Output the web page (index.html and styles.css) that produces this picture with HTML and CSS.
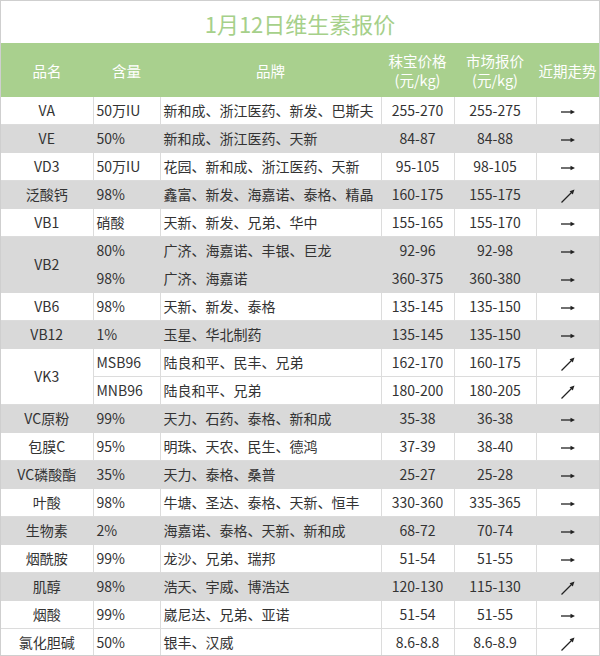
FILE: index.html
```html
<!DOCTYPE html>
<html lang="zh-CN">
<head>
<meta charset="utf-8">
<link rel="stylesheet" href="styles.css">
</head>
<body>
<div class="sheet">
  <div class="title">1月12日维生素报价</div>
  <table class="grid">
    <colgroup>
      <col class="c1"><col class="c2"><col class="c3"><col class="c4"><col class="c5"><col class="c6">
    </colgroup>
    <thead>
      <tr>
        <th>品名</th><th>含量</th><th>品牌</th>
        <th>秣宝价格<br>(元/kg)</th><th>市场报价<br>(元/kg)</th><th>近期走势</th>
      </tr>
    </thead>
    <tbody>
      <tr><td class="name">VA</td><td class="lt">50万IU</td><td class="lt">新和成、浙江医药、新发、巴斯夫</td><td>255-270</td><td>255-275</td><td><svg class="ar" viewBox="0 0 16 16"><use href="#flat"/></svg></td></tr>
      <tr class="g"><td class="name">VE</td><td class="lt">50%</td><td class="lt">新和成、浙江医药、天新</td><td>84-87</td><td>84-88</td><td><svg class="ar" viewBox="0 0 16 16"><use href="#flat"/></svg></td></tr>
      <tr><td class="name">VD3</td><td class="lt">50万IU</td><td class="lt">花园、新和成、浙江医药、天新</td><td>95-105</td><td>98-105</td><td><svg class="ar" viewBox="0 0 16 16"><use href="#flat"/></svg></td></tr>
      <tr class="g"><td class="name">泛酸钙</td><td class="lt">98%</td><td class="lt">鑫富、新发、海嘉诺、泰格、精晶</td><td>160-175</td><td>155-175</td><td><svg class="ar" viewBox="0 0 16 16"><use href="#up"/></svg></td></tr>
      <tr><td class="name">VB1</td><td class="lt">硝酸</td><td class="lt">天新、新发、兄弟、华中</td><td>155-165</td><td>155-170</td><td><svg class="ar" viewBox="0 0 16 16"><use href="#flat"/></svg></td></tr>
      <tr class="g"><td class="name" rowspan="2">VB2</td><td class="lt">80%</td><td class="lt">广济、海嘉诺、丰银、巨龙</td><td>92-96</td><td>92-98</td><td><svg class="ar" viewBox="0 0 16 16"><use href="#flat"/></svg></td></tr>
      <tr class="g"><td class="lt">98%</td><td class="lt">广济、海嘉诺</td><td>360-375</td><td>360-380</td><td><svg class="ar" viewBox="0 0 16 16"><use href="#flat"/></svg></td></tr>
      <tr><td class="name">VB6</td><td class="lt">98%</td><td class="lt">天新、新发、泰格</td><td>135-145</td><td>135-150</td><td><svg class="ar" viewBox="0 0 16 16"><use href="#flat"/></svg></td></tr>
      <tr class="g"><td class="name">VB12</td><td class="lt">1%</td><td class="lt">玉星、华北制药</td><td>135-145</td><td>135-150</td><td><svg class="ar" viewBox="0 0 16 16"><use href="#flat"/></svg></td></tr>
      <tr><td class="name" rowspan="2">VK3</td><td class="lt">MSB96</td><td class="lt">陆良和平、民丰、兄弟</td><td>162-170</td><td>160-175</td><td><svg class="ar" viewBox="0 0 16 16"><use href="#up"/></svg></td></tr>
      <tr><td class="lt">MNB96</td><td class="lt">陆良和平、兄弟</td><td>180-200</td><td>180-205</td><td><svg class="ar" viewBox="0 0 16 16"><use href="#up"/></svg></td></tr>
      <tr class="g"><td class="name">VC原粉</td><td class="lt">99%</td><td class="lt">天力、石药、泰格、新和成</td><td>35-38</td><td>36-38</td><td><svg class="ar" viewBox="0 0 16 16"><use href="#flat"/></svg></td></tr>
      <tr><td class="name">包膜C</td><td class="lt">95%</td><td class="lt">明珠、天农、民生、德鸿</td><td>37-39</td><td>38-40</td><td><svg class="ar" viewBox="0 0 16 16"><use href="#flat"/></svg></td></tr>
      <tr class="g"><td class="name">VC磷酸酯</td><td class="lt">35%</td><td class="lt">天力、泰格、桑普</td><td>25-27</td><td>25-28</td><td><svg class="ar" viewBox="0 0 16 16"><use href="#flat"/></svg></td></tr>
      <tr><td class="name">叶酸</td><td class="lt">98%</td><td class="lt">牛塘、圣达、泰格、天新、恒丰</td><td>330-360</td><td>335-365</td><td><svg class="ar" viewBox="0 0 16 16"><use href="#flat"/></svg></td></tr>
      <tr class="g"><td class="name">生物素</td><td class="lt">2%</td><td class="lt">海嘉诺、泰格、天新、新和成</td><td>68-72</td><td>70-74</td><td><svg class="ar" viewBox="0 0 16 16"><use href="#flat"/></svg></td></tr>
      <tr><td class="name">烟酰胺</td><td class="lt">99%</td><td class="lt">龙沙、兄弟、瑞邦</td><td>51-54</td><td>51-55</td><td><svg class="ar" viewBox="0 0 16 16"><use href="#flat"/></svg></td></tr>
      <tr class="g"><td class="name">肌醇</td><td class="lt">98%</td><td class="lt">浩天、宇威、博浩达</td><td>120-130</td><td>115-130</td><td><svg class="ar" viewBox="0 0 16 16"><use href="#up"/></svg></td></tr>
      <tr><td class="name">烟酸</td><td class="lt">99%</td><td class="lt">崴尼达、兄弟、亚诺</td><td>51-54</td><td>51-55</td><td><svg class="ar" viewBox="0 0 16 16"><use href="#flat"/></svg></td></tr>
      <tr><td class="name">氯化胆碱</td><td class="lt">50%</td><td class="lt">银丰、汉威</td><td>8.6-8.8</td><td>8.6-8.9</td><td><svg class="ar" viewBox="0 0 16 16"><use href="#up"/></svg></td></tr>
    </tbody>
  </table>
</div>
<svg class="defs" width="0" height="0">
  <defs>
    <g id="flat"><line x1="1" y1="8" x2="12" y2="8" stroke="#222" stroke-width="1.3"/><polygon points="15,8 10.5,5.7 10.5,10.3" fill="#222"/></g>
    <g id="up"><line x1="1.5" y1="14.5" x2="12" y2="4" stroke="#222" stroke-width="1.3"/><polygon points="14.5,1.5 9.6,3.2 12.8,6.4" fill="#222"/></g>
  </defs>
</svg>
</body>
</html>
```
FILE: styles.css
```css
html, body {
  margin: 0;
  padding: 0;
  background: #ffffff;
}
.sheet {
  width: 600px;
  height: 656px;
  box-sizing: border-box;
  border: 1px solid #cfcfcf;
  overflow: hidden;
  font-family: "Noto Sans CJK SC", "Noto Sans", sans-serif;
  color: #333333;
}
.title {
  height: 42px;
  line-height: 44px;
  text-align: center;
  font-size: 22px;
  color: #a6d08a;
}
.grid {
  width: 598px;
  border-collapse: collapse;
  table-layout: fixed;
}
.c1 { width: 92px; }
.c2 { width: 67px; }
.c3 { width: 221px; }
.c4 { width: 73px; }
.c5 { width: 82px; }
.c6 { width: 63px; }
.grid th {
  background: #a9d08e;
  color: #ffffff;
  font-weight: normal;
  font-size: 14.5px;
  line-height: 19px;
  height: 54px;
  padding: 0;
  text-align: center;
  border: none;
}
.grid td {
  height: 27px;
  padding: 0;
  font-size: 14px;
  line-height: 27px;
  text-align: center;
  border: 1px solid #dcdcdc;
  white-space: nowrap;
  overflow: hidden;
}
.grid tbody tr:first-child td {
  border-top: none;
}
.grid td:first-child { border-left: none; }
.grid td:last-child { border-right: none; }
.grid td.lt {
  text-align: left;
  padding-left: 3px;
}
.grid tr.g td {
  background: #d9d9d9;
  border-color: #d9d9d9;
}
.ar {
  width: 16px;
  height: 16px;
  vertical-align: middle;
}
.defs {
  position: absolute;
  width: 0;
  height: 0;
}
```
